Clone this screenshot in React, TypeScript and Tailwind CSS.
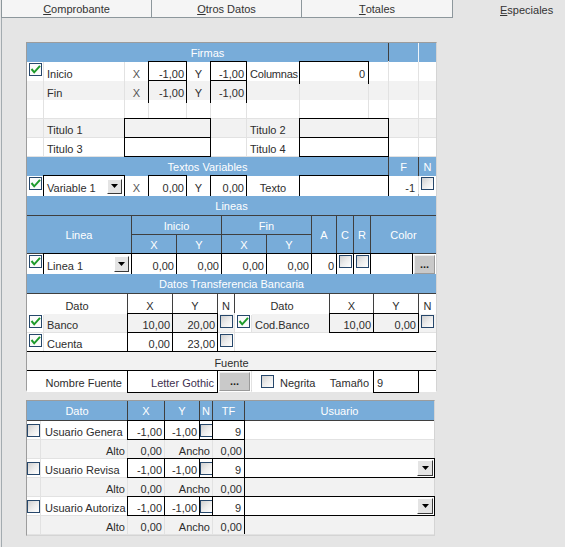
import React from "react";

type P = { children?: React.ReactNode; className?: string };

const FONT = "font-['Liberation_Sans',Arial,sans-serif]";

// column templates, one per grid block (widths exclude the 1px grid lines)
const FIRMAS = "grid-cols-[16px_80px_23px_37px_23px_35px_52px_68px_19px_29px_17px]";
const LINEAS = "grid-cols-[16px_87px_44px_44px_44px_44px_24px_16px_16px_41px_23px]";
const BANCO = "grid-cols-[16px_83px_44px_44px_16px_16px_77px_43px_44px_17px]";
const FUENTE = "grid-cols-[100px_89px_33px_121px_44px_17px]";
const USUARIO = "grid-cols-[13px_86px_36px_34px_12px_31px_189px]";

const ROW = "grid h-[19px] gap-x-px border-b bg-[#e2e2e2]";
const LIGHT = "border-[#e2e2e2]";
const HEAD = "grid gap-x-px border-b bg-[#3f3f3f]";
const WHITE = "*:bg-white";
const GRAY = "*:bg-[#f2f2f2]";
const BOX = "outline outline-black";

// text cells: the reference font sits a little lower in its rows, hence the pt
function H({ children, className = "" }: P) {
  return (
    <div className={`flex items-center justify-center bg-[#78acd9] pt-[2px] text-white ${className}`}>{children}</div>
  );
}

function T({ children, className = "" }: P) {
  return (
    <div className={`flex items-center overflow-hidden whitespace-nowrap pl-[3px] pt-[4px] ${className}`}>
      {children}
    </div>
  );
}

function R({ children, className = "" }: P) {
  return (
    <div className={`flex items-center justify-end overflow-hidden whitespace-nowrap pr-[2px] pt-[4px] ${className}`}>
      {children}
    </div>
  );
}

function M({ children, className = "" }: P) {
  return (
    <div className={`flex items-center justify-center whitespace-nowrap pt-[4px] ${className}`}>{children}</div>
  );
}

function Check({ on = false }: { on?: boolean }) {
  return (
    <span
      className={`flex h-[13px] w-[13px] shrink-0 items-center justify-center border border-[#26476b] ${
        on ? "bg-[#fbfbfb]" : "bg-linear-to-br from-[#cfcfcf] via-[#ececec] to-white"
      }`}
    >
      {on && (
        <svg width="11" height="11" viewBox="0 0 11 11">
          <path d="M1.5 5 L4.2 8.3 L10 1.8" fill="none" stroke="#1d9a2a" strokeWidth="2" />
        </svg>
      )}
    </span>
  );
}

// checkbox cell; panel 1 sits them near the top of the row
function Chk({ on, className = "items-start pt-px" }: { on?: boolean; className?: string }) {
  return (
    <div className={`flex justify-center ${className}`}>
      <Check on={on} />
    </div>
  );
}

function Drop({ className = "h-[15px] w-[15px]" }: { className?: string }) {
  return (
    <span
      className={`ml-auto flex shrink-0 items-center justify-center border border-t-white border-l-white border-r-[#3a3a3a] border-b-[#3a3a3a] bg-[#e4e4e4] ${className}`}
    >
      <svg width="7" height="4" viewBox="0 0 7 4">
        <path d="M0 0h7L3.5 4z" fill="#000" />
      </svg>
    </span>
  );
}

function Dots() {
  return (
    <span className="flex h-full w-full items-end justify-center border border-t-[#ececec] border-l-[#ececec] border-r-[#9a9a9a] border-b-[#9a9a9a] bg-[#c9c9c9] pb-[3px] font-bold leading-none text-[#222]">
      ...
    </span>
  );
}

function Tab({ children, className = "" }: P) {
  return (
    <div
      className={`flex items-center justify-center border-b border-r border-[#8d979c] bg-[#f5f5f5] pt-[2px] ${className}`}
    >
      {children}
    </div>
  );
}

function PanelOne() {
  return (
    <div className="w-[411px] border border-t-[#9c9c9c] border-l-[#9c9c9c] border-r-[#d4d4d4] border-b-[#d4d4d4]">
      {/* Firmas */}
      <div className={`${HEAD} h-[19px] ${FIRMAS} ${LIGHT}`}>
        <H className="col-span-9">Firmas</H>
        <H />
        <H className="shadow-[-1px_0_0_#eef4fa]" />
      </div>
      <div className={`${ROW} ${LIGHT} ${FIRMAS} ${WHITE}`}>
        <Chk on />
        <T>Inicio</T>
        <M className="text-[#555]">X</M>
        <R className={BOX}>-1,00</R>
        <M>Y</M>
        <R className={BOX}>-1,00</R>
        <T className="pl-[2px] tracking-[-0.2px]">Columnas</T>
        <R className={`${BOX} pr-[3px]`}>0</R>
        <div />
        <div />
        <div />
      </div>
      <div className={`${ROW} ${LIGHT} ${FIRMAS} ${GRAY}`}>
        <div />
        <T>Fin</T>
        <M className="text-[#555]">X</M>
        <R className={BOX}>-1,00</R>
        <M>Y</M>
        <R className={BOX}>-1,00</R>
        <div />
        <div />
        <div />
        <div />
        <div />
      </div>
      <div className={`${ROW} ${LIGHT} ${FIRMAS} ${WHITE}`}>
        {Array.from({ length: 11 }).map((_, i) => (
          <div key={i} />
        ))}
      </div>
      <div className={`${ROW} ${LIGHT} ${FIRMAS} ${GRAY}`}>
        <div />
        <T>Titulo 1</T>
        <div className={`col-span-3 ${BOX}`} />
        <div />
        <T className="pl-[2px]">Titulo 2</T>
        <div className={`col-span-2 ${BOX}`} />
        <div />
        <div />
      </div>
      <div className={`${ROW} ${LIGHT} ${FIRMAS} ${WHITE}`}>
        <div />
        <T>Titulo 3</T>
        <div className={`col-span-3 ${BOX}`} />
        <div />
        <T className="pl-[2px]">Titulo 4</T>
        <div className={`col-span-2 ${BOX}`} />
        <div />
        <div />
      </div>

      {/* Textos Variables */}
      <div className={`${HEAD} h-[19px] ${FIRMAS} border-[#3f3f3f]`}>
        <H className="col-span-9">Textos Variables</H>
        <H>F</H>
        <H>N</H>
      </div>
      <div className={`${ROW} border-[#a8a8a8] ${FIRMAS} ${WHITE}`}>
        <Chk on />
        <div className={`flex items-center pl-[3px] pr-[2px] ${BOX}`}>
          <span className="pt-[4px]">Variable 1</span>
          <Drop />
        </div>
        <M className="text-[#555]">X</M>
        <R className={BOX}>0,00</R>
        <M>Y</M>
        <R className={BOX}>0,00</R>
        <M>Texto</M>
        <div className={`col-span-2 ${BOX}`} />
        <R className="pr-[3px]">-1</R>
        <Chk />
      </div>
      <div className="h-px bg-[#a8a8a8]" />

      {/* Lineas */}
      <div className={`${HEAD} h-[20px] grid-cols-1 border-[#3f3f3f]`}>
        <H>Lineas</H>
      </div>
      <div className={`grid grid-rows-[18px_18px] gap-px border-b border-[#3f3f3f] bg-[#3f3f3f] ${LINEAS}`}>
        <H className="col-span-2 row-span-2">Linea</H>
        <H className="col-span-2">Inicio</H>
        <H className="col-span-2">Fin</H>
        <H className="row-span-2">A</H>
        <H className="row-span-2">C</H>
        <H className="row-span-2">R</H>
        <H className="col-span-2 row-span-2">Color</H>
        <H>X</H>
        <H>Y</H>
        <H>X</H>
        <H>Y</H>
      </div>
      <div className={`${ROW} border-[#b0b0b0] ${LINEAS} ${WHITE}`}>
        <Chk on />
        <div className={`flex items-center pl-[3px] pr-[2px] ${BOX}`}>
          <span className="pt-[4px]">Linea 1</span>
          <Drop className="h-[16px] w-[15px]" />
        </div>
        <R className={BOX}>0,00</R>
        <R className={BOX}>0,00</R>
        <R className={BOX}>0,00</R>
        <R className={BOX}>0,00</R>
        <R className={BOX}>0</R>
        <Chk className={`items-start pt-px ${BOX}`} />
        <Chk className={`items-start pt-px ${BOX}`} />
        <div className={BOX} />
        <div className="p-px">
          <Dots />
        </div>
      </div>
      <div className="h-px bg-[#b0b0b0]" />

      {/* Datos Transferencia Bancaria */}
      <div className={`${HEAD} h-[20px] grid-cols-1 border-[#3f3f3f]`}>
        <H>Datos Transferencia Bancaria</H>
      </div>
      <div className={`${HEAD} h-[20px] ${BANCO} ${LIGHT} ${WHITE}`}>
        <M className="col-span-2">Dato</M>
        <M>X</M>
        <M>Y</M>
        <M>N</M>
        <M className="col-span-2">Dato</M>
        <M>X</M>
        <M>Y</M>
        <M>N</M>
      </div>
      <div className={`${ROW} ${LIGHT} ${BANCO} ${GRAY}`}>
        <div>
          <Chk on className="h-full items-start bg-white pt-px" />
        </div>
        <T>Banco</T>
        <R className={BOX}>10,00</R>
        <R className={BOX}>20,00</R>
        <Chk />
        <div>
          <Chk on className="h-full items-start bg-white pt-px" />
        </div>
        <T>Cod.Banco</T>
        <R className={BOX}>10,00</R>
        <R className={BOX}>0,00</R>
        <Chk />
      </div>
      <div className={`${ROW} border-black ${BANCO} ${WHITE}`}>
        <Chk on />
        <T>Cuenta</T>
        <R className={BOX}>0,00</R>
        <R className={BOX}>23,00</R>
        <Chk />
        <div className="col-span-5" />
      </div>

      {/* Fuente */}
      <div className="flex h-[19px] items-center justify-center border-b border-black bg-[#f2f2f2] pt-[4px]">
        Fuente
      </div>
      <div className={`${ROW} ${LIGHT} ${FUENTE} ${WHITE}`}>
        <R className="pr-[5px]">Nombre Fuente</R>
        <R className={`pr-[3px] text-[#3d3050] ${BOX}`}>Letter Gothic</R>
        <div className="p-px">
          <Dots />
        </div>
        <div className="flex items-center pl-[9px] pr-[4px]">
          <Check />
          <span className="ml-[6px] pt-[4px]">Negrita</span>
          <span className="ml-auto pt-[4px]">Tamaño</span>
        </div>
        <T className={BOX}>9</T>
        <div />
      </div>
    </div>
  );
}

function UserRows({ label, combo }: { label: string; combo: boolean }) {
  return (
    <>
      <div className={`${ROW} ${LIGHT} ${USUARIO} ${WHITE}`}>
        <Chk className="items-center" />
        <T className="pl-[4px]">{label}</T>
        <R className={BOX}>-1,00</R>
        <R className={BOX}>-1,00</R>
        <Chk className={`items-center ${BOX}`} />
        <R className={`pr-[3px] ${BOX}`}>9</R>
        {combo ? (
          <div className={`flex items-center pr-[1px] ${BOX}`}>
            <Drop className="h-[16px] w-[16px]" />
          </div>
        ) : (
          <div className="shadow-[-1px_0_0_#000]" />
        )}
      </div>
      <div className={`${ROW} ${LIGHT} ${USUARIO} ${GRAY}`}>
        <div />
        <R>Alto</R>
        <R>0,00</R>
        <R className="col-span-2">Ancho</R>
        <R>0,00</R>
        <div className="shadow-[-1px_0_0_#000]" />
      </div>
    </>
  );
}

function PanelTwo() {
  return (
    <div className="mt-[9px] w-[409px] border border-t-[#9c9c9c] border-l-[#9c9c9c] border-r-[#d4d4d4] border-b-[#d4d4d4]">
      <div className={`${HEAD} h-[20px] ${USUARIO} border-[#3f3f3f]`}>
        <H className="col-span-2">Dato</H>
        <H>X</H>
        <H>Y</H>
        <H>N</H>
        <H>TF</H>
        <H>Usuario</H>
      </div>
      <UserRows label="Usuario Genera" combo={false} />
      <UserRows label="Usuario Revisa" combo />
      <UserRows label="Usuario Autoriza" combo />
    </div>
  );
}

export default function App() {
  return (
    <div className={`h-[547px] w-[565px] overflow-hidden bg-[#e5e5e5] text-[11px] text-[#2d2d2d] ${FONT}`}>
      <div className="flex h-[18px] text-[#333]">
        <div className="w-px" />
        <Tab className="w-[151px] border-l">
          <span className="underline">C</span>omprobante
        </Tab>
        <Tab className="w-[150px]">
          <span className="underline">O</span>tros Datos
        </Tab>
        <Tab className="w-[151px]">
          <span className="underline">T</span>otales
        </Tab>
        <div className="flex flex-1 items-center pl-[47px] pt-[2px]">
          <span className="underline">E</span>speciales
        </div>
      </div>
      <div className="ml-px flex h-[529px] flex-col border-l border-[#a3abb0] pl-[24px] pt-[24px]">
        <PanelOne />
        <PanelTwo />
      </div>
    </div>
  );
}
